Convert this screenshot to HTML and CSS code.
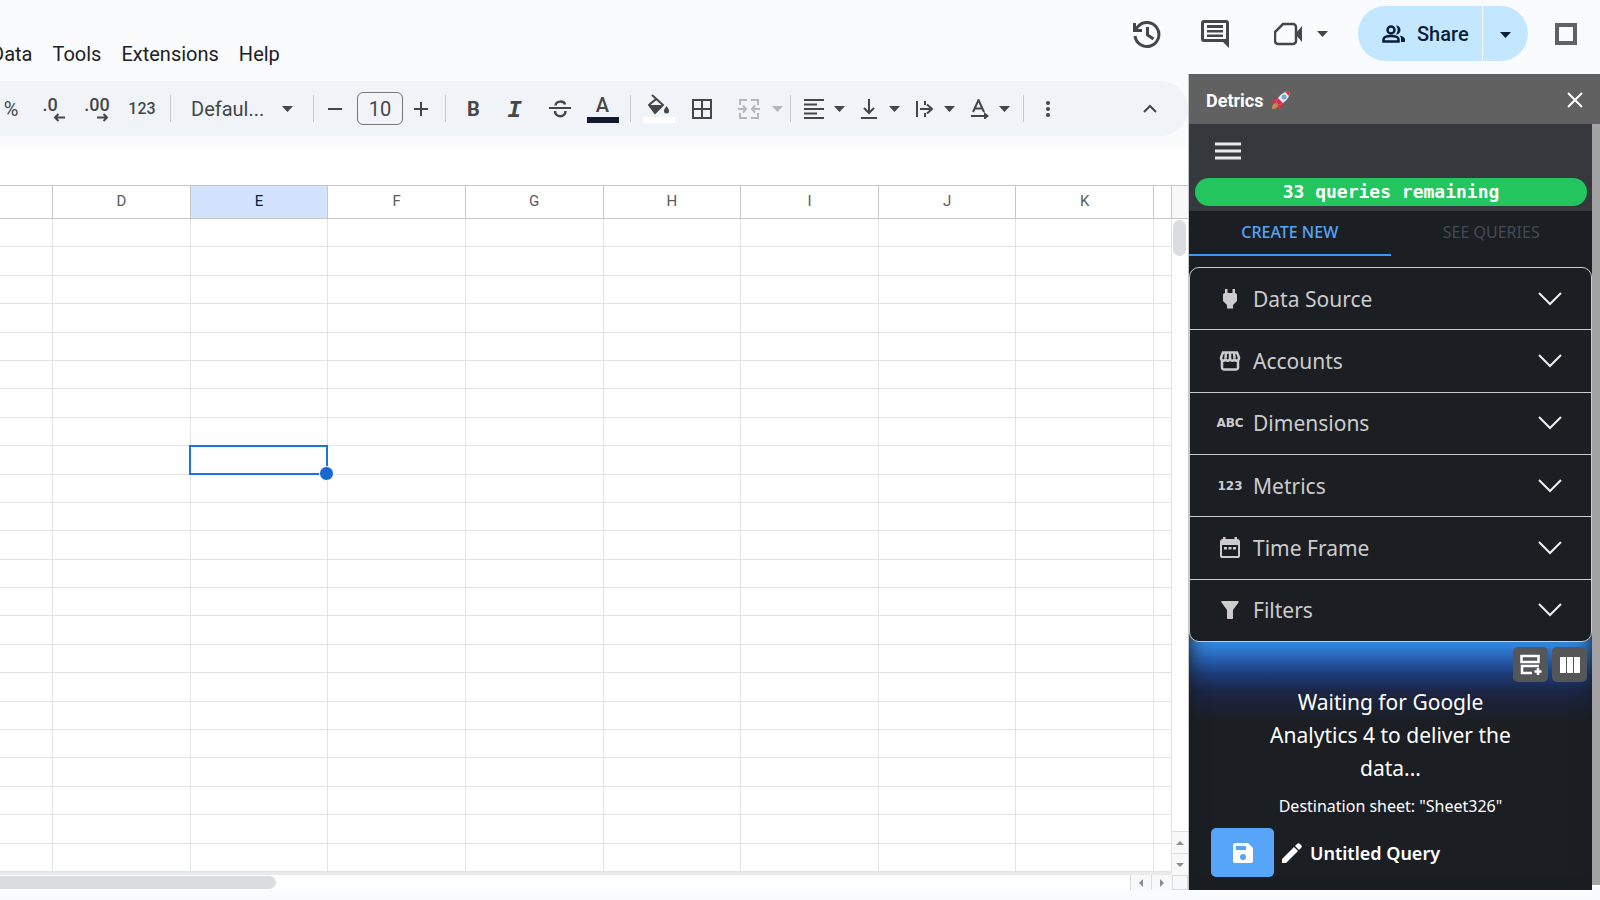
FILE: index.html
```html
<!DOCTYPE html>
<html lang="en">
<head>
    <meta charset="UTF-8">
    <meta name="viewport" content="width=device-width, initial-scale=1.0">
    <title>Detrics - Sheet</title>
    <link rel="stylesheet" href="styles.css">
</head>
<body>
    <header class="topbar">
        <nav class="menu">
            <button class="menu-first">Data</button>
            <button>Tools</button>
            <button>Extensions</button>
            <button>Help</button>
        </nav>
        <div class="actions">
            <button class="action" aria-label="Version history">
                <svg width="30" height="30" viewBox="0 0 30 30" fill="none" stroke="#444746" stroke-width="3"><path d="M3 17a12 12 0 1 0 3-9.500L3 10.500"/><path d="M2.500 4v7.500H10M15.500 8v8l6 4"/></svg>
            </button>
            <button class="action" aria-label="Comments">
                <svg width="28" height="28" viewBox="0 0 28 28"><path d="M3 0h22a3 3 0 0 1 3 3v25l-6-6H3a3 3 0 0 1-3-3V3a3 3 0 0 1 3-3zm0 3v16h22V3zM6 5h16v3H6zm0 5h16v2.500H6zm0 4.500h16V17H6z" fill="#444746" fill-rule="evenodd"/></svg>
            </button>
            <button class="action meet" aria-label="Meet">
                <svg width="30" height="24" viewBox="0 0 30 24"><path d="M9 2h10a3 3 0 0 1 3 3v14a3 3 0 0 1-3 3H4a3 3 0 0 1-3-3v-9z" fill="none" stroke="#444746" stroke-width="2.500"/><path d="M22 11l6-7v16l-6-7z" fill="#444746"/></svg>
                <svg width="11" height="6" viewBox="0 0 11 6"><path d="M0 0h11L5.500 6z" fill="#444746"/></svg>
            </button>
            <div class="share">
                <button class="share-main">
                    <svg width="24" height="18" viewBox="0 0 24 18" fill="none" stroke="#0b1d3a" stroke-width="2.500"><circle cx="9" cy="5" r="3.500"/><path d="M1.500 16.500v-2c0-2.500 4-3.500 7.500-3.500s7.500 1 7.500 3.500v2z"/><path d="M14 .5a4.500 4.500 0 0 1 0 9 7 7 0 0 0 0-9zM17.500 10.500c3 .5 5.500 2 5.500 4V17h-4v-3c0-1.500-.5-2.500-1.500-3.500z" fill="#0b1d3a" stroke="none"/></svg>
                    Share
                </button>
                <button class="share-more" aria-label="Share options">
                    <svg width="11" height="6" viewBox="0 0 11 6"><path d="M0 0h11L5.500 6z" fill="#0b1d3a"/></svg>
                </button>
            </div>
            <button class="account" aria-label="Account"></button>
        </div>
    </header>

    <main class="workspace">
        <section class="editor">
            <div class="toolbar">
                <button class="tool percent">%</button>
                <button class="tool decimal" aria-label="Decrease decimals">.0
                    <svg class="left-arrow" width="12" height="9" viewBox="0 0 12 9"><path d="M12 4.500H2M5.500 1L2 4.500 5.500 8" fill="none" stroke="#444746" stroke-width="2"/></svg>
                </button>
                <button class="tool decimal" aria-label="Increase decimals">.00
                    <svg class="right-arrow" width="12" height="9" viewBox="0 0 12 9"><path d="M0 4.500h10M6.500 1L10 4.500 6.500 8" fill="none" stroke="#444746" stroke-width="2"/></svg>
                </button>
                <button class="tool number">123</button>
                <span class="sep"></span>
                <label class="font">
                    <select aria-label="Font"><option>Defaul...</option></select>
                    <svg class="caret" width="11" height="6" viewBox="0 0 11 6"><path d="M0 0h11L5.500 6z"/></svg>
                </label>
                <span class="sep"></span>
                <button class="tool minus" aria-label="Smaller">
                    <svg width="14" height="14" viewBox="0 0 14 14"><path d="M0 7h14" stroke="#444746" stroke-width="2"/></svg>
                </button>
                <input class="size" type="text" value="10" aria-label="Font size">
                <button class="tool plus" aria-label="Bigger">
                    <svg width="14" height="14" viewBox="0 0 14 14"><path d="M0 7h14M7 0v14" stroke="#444746" stroke-width="2"/></svg>
                </button>
                <span class="sep"></span>
                <button class="tool style bold">B</button>
                <button class="tool style italic">I</button>
                <button class="tool style" aria-label="Strikethrough">
                    <svg width="22" height="18" viewBox="0 0 22 18" fill="none" stroke="#444746" stroke-width="2"><path d="M0 8h22"/><path d="M6.500 5.500C7 .500 15 .500 16 4.500M6 11c0 7 10.500 7 10.500 0" stroke-width="2.500"/></svg>
                </button>
                <button class="tool style text-color"><span>A</span><i class="swatch dark"></i></button>
                <span class="sep"></span>
                <button class="tool style text-color" aria-label="Fill color">
                    <svg width="22" height="22" viewBox="0 0 22 22"><path d="M4 1l11 10-8 8-6-8 7-6" fill="none" stroke="#444746" stroke-width="2"/><path d="M1 11h14l-7 8zM18.500 12c1.500 2 2.500 3.500 2.500 5a2.500 2.500 0 0 1-5 0c0-1.500 1-3 2.500-5z" fill="#444746"/></svg>
                    <i class="swatch"></i>
                </button>
                <button class="tool style" aria-label="Borders">
                    <svg width="20" height="20" viewBox="0 0 20 20" fill="none" stroke="#444746" stroke-width="2"><path d="M1 1h18v18H1zM10 1v18M1 10h18"/></svg>
                </button>
                <button class="tool merge" aria-label="Merge cells" disabled>
                    <svg width="22" height="20" viewBox="0 0 22 20" fill="none" stroke="#b4b8ba" stroke-width="2"><path d="M9 1H2v5M9 19H2v-5M13 1h7v5M13 19h7v-5M0 10h7M22 10h-7M5 6.500L8 10l-3 3.500M17 6.500L14 10l3 3.500"/></svg>
                    <svg class="caret" width="11" height="6" viewBox="0 0 11 6"><path d="M0 0h11L5.500 6z"/></svg>
                </button>
                <span class="sep"></span>
                <button class="tool drop" aria-label="Horizontal align">
                    <svg width="24" height="20" viewBox="0 0 24 20"><path d="M2 1h20M2 5.500h13M2 10h20M2 14.500h13M2 19h20" stroke="#444746" stroke-width="2"/></svg>
                    <svg class="caret" width="11" height="6" viewBox="0 0 11 6"><path d="M0 0h11L5.500 6z"/></svg>
                </button>
                <button class="tool drop" aria-label="Vertical align">
                    <svg width="24" height="20" viewBox="0 0 24 20"><path d="M12 0v13M7 9l5 5 5-5M4 19h16" fill="none" stroke="#444746" stroke-width="2"/></svg>
                    <svg class="caret" width="11" height="6" viewBox="0 0 11 6"><path d="M0 0h11L5.500 6z"/></svg>
                </button>
                <button class="tool drop" aria-label="Text wrapping">
                    <svg width="24" height="20" viewBox="0 0 24 20"><path d="M5 2v16M13 2v4M13 14v4M8 10h12M15 5.500l5 4.500-5 4.500" fill="none" stroke="#444746" stroke-width="2"/></svg>
                    <svg class="caret" width="11" height="6" viewBox="0 0 11 6"><path d="M0 0h11L5.500 6z"/></svg>
                </button>
                <button class="tool drop" aria-label="Text rotation">
                    <svg width="24" height="20" viewBox="0 0 24 20"><path d="M6 13l5.500-12 5.500 12M8 9.500h7" fill="none" stroke="#444746" stroke-width="2"/><path d="M4 16h13v-3l5 4-5 4v-3H4z" fill="#444746"/></svg>
                    <svg class="caret" width="11" height="6" viewBox="0 0 11 6"><path d="M0 0h11L5.500 6z"/></svg>
                </button>
                <span class="sep"></span>
                <button class="tool more" aria-label="More">
                    <svg width="6" height="18" viewBox="0 0 6 18" fill="#444746"><circle cx="3" cy="3" r="2"/><circle cx="3" cy="9" r="2"/><circle cx="3" cy="15" r="2"/></svg>
                </button>
                <button class="tool collapse" aria-label="Hide menus">
                    <svg width="14" height="9" viewBox="0 0 14 9"><path d="M1 8l6-6 6 6" fill="none" stroke="#444746" stroke-width="2"/></svg>
                </button>
            </div>
            <div class="formula-bar"></div>
            <div class="sheet">
                <div class="table-wrap">
                    <table class="cells">
                        <thead>
                            <tr>
                                <th class="edge"></th>
                                <th>D</th>
                                <th class="active">E</th>
                                <th>F</th>
                                <th>G</th>
                                <th>H</th>
                                <th>I</th>
                                <th>J</th>
                                <th>K</th>
                                <th class="last"></th>
                            </tr>
                        </thead>
                        <tbody id="rows"></tbody>
                    </table>
                </div>
                <div class="vscroll">
                    <div class="vhead"></div>
                    <div class="vthumb"></div>
                    <button class="vbtn up" aria-label="Scroll up"><svg width="8" height="4" viewBox="0 0 8 4"><path d="M0 4h8L4 0z" fill="#8a8d90"/></svg></button>
                    <button class="vbtn" aria-label="Scroll down"><svg width="8" height="4" viewBox="0 0 8 4"><path d="M0 0h8L4 4z" fill="#8a8d90"/></svg></button>
                </div>
                <div class="hscroll">
                    <div class="hthumb"></div>
                    <button class="hbtn first" aria-label="Scroll left"><svg width="4" height="8" viewBox="0 0 4 8"><path d="M4 0v8L0 4z" fill="#8a8d90"/></svg></button>
                    <button class="hbtn" aria-label="Scroll right"><svg width="4" height="8" viewBox="0 0 4 8"><path d="M0 0v8l4-4z" fill="#8a8d90"/></svg></button>
                </div>
                <div class="corner"></div>
            </div>
        </section>

        <aside class="sidebar">
            <div class="side-title">
                <h2>Detrics</h2>
                <svg width="20" height="20" viewBox="0 0 20 20"><path d="M6 8L1 11l1 3 4-2zM12 14l-3 5-3-1 2-4z" fill="#dd2e44"/><path d="M5 13c-3 0-4 3-4 6 3 0 6-1 6-4z" fill="#c98a4b"/><path d="M19 1c-6 0-11 4-14 11l3 3c7-3 11-8 11-14z" fill="#e6edf2"/><path d="M19 1c-2 0-4 .3-5 1l4 4c.7-2 1-3 1-5zM5 12l3 3 4-2-5-5z" fill="#dd2e44"/><circle cx="13" cy="7" r="2.500" fill="#6fa8d8"/></svg>
                <button class="close" aria-label="Close"><svg width="16" height="16" viewBox="0 0 16 16"><path d="M1 1l14 14M15 1L1 15" stroke="#fff" stroke-width="2"/></svg></button>
            </div>
            <div class="side-body">
                <div class="app">
                    <div class="app-head">
                        <button class="burger" aria-label="Menu"><svg width="26" height="18" viewBox="0 0 26 18"><path d="M0 2h26M0 9h26M0 16h26" stroke="#e8e8e8" stroke-width="3"/></svg></button>
                        <div class="pill">33 queries remaining</div>
                    </div>
                    <div class="tabs">
                        <button class="tab on">CREATE NEW</button>
                        <button class="tab">SEE QUERIES</button>
                    </div>
                    <div class="accordion">
                        <button class="item">
                            <span class="ico"><svg width="20" height="20" viewBox="0 0 20 20" fill="#ccc"><path d="M5 0h2.500v4h5V0H15v4c1.500 0 2 1 2 2v6l-4 4v3.500H7V16l-4-4V6c0-1 .5-2 2-2z"/></svg></span>
                            <span>Data Source</span>
                            <svg class="chev" width="24" height="14" viewBox="0 0 24 14"><path d="M1 1l11 11L23 1"/></svg>
                        </button>
                        <button class="item">
                            <span class="ico"><svg width="22" height="20" viewBox="0 0 22 20" fill="none" stroke="#ccc" stroke-width="2.500"><path d="M4 1.500h14l2 5c0 4-4 4-4.500 1C15 10.500 11 10.500 11 7c0 3.500-4 3.500-4.500 .5C6 10.500 2 10.500 2 6.500zM6.500 7L7 1M11 7V1M15.500 7L15 1M3 9v8a2 2 0 0 0 2 1.500h12a2 2 0 0 0 2-1.500V9"/></svg></span>
                            <span>Accounts</span>
                            <svg class="chev" width="24" height="14" viewBox="0 0 24 14"><path d="M1 1l11 11L23 1"/></svg>
                        </button>
                        <button class="item">
                            <span class="ico word">ABC</span>
                            <span>Dimensions</span>
                            <svg class="chev" width="24" height="14" viewBox="0 0 24 14"><path d="M1 1l11 11L23 1"/></svg>
                        </button>
                        <button class="item">
                            <span class="ico word">123</span>
                            <span>Metrics</span>
                            <svg class="chev" width="24" height="14" viewBox="0 0 24 14"><path d="M1 1l11 11L23 1"/></svg>
                        </button>
                        <button class="item">
                            <span class="ico"><svg width="20" height="22" viewBox="0 0 20 22" fill="#ccc"><path fill-rule="evenodd" d="M3 0h2.500v2h9V0H17v2a3 3 0 0 1 3 3v14a2 2 0 0 1-2 2H2a2 2 0 0 1-2-2V5a3 3 0 0 1 3-3zM2 8v11h16V8z"/><path d="M4 10h3v2.500H4zm4.500 0h3v2.500h-3zm4.500 0h3v2.500h-3z"/></svg></span>
                            <span>Time Frame</span>
                            <svg class="chev" width="24" height="14" viewBox="0 0 24 14"><path d="M1 1l11 11L23 1"/></svg>
                        </button>
                        <button class="item">
                            <span class="ico"><svg width="18" height="18" viewBox="0 0 18 18" fill="#ccc"><path d="M1 0h16c1 0 1 1 .5 1.500L12 9v8c0 .6-.4 1-1 1H7c-.6 0-1-.4-1-1V9L.5 1.500C0 1 0 0 1 0z"/></svg></span>
                            <span>Filters</span>
                            <svg class="chev" width="24" height="14" viewBox="0 0 24 14"><path d="M1 1l11 11L23 1"/></svg>
                        </button>
                    </div>
                    <div class="status">
                        <div class="status-tools">
                            <button aria-label="Append rows"><svg width="22" height="22" viewBox="0 0 22 22" fill="none" stroke="#fff" stroke-width="2.500"><path d="M3 2h15.500v6H1.500V2zM19 12H2v7h10M18 14v7M14.500 17.500h7"/></svg></button>
                            <button aria-label="Columns"><svg width="20" height="16" viewBox="0 0 20 16" fill="#fff"><path d="M0 0h6v16H0zM7 0h6v16H7zM14 0h6v16h-6z"/></svg></button>
                        </div>
                        <p class="waiting">Waiting for Google Analytics 4 to deliver the data...</p>
                        <p class="destination">Destination sheet: "Sheet326"</p>
                        <div class="query">
                            <button class="save" aria-label="Save"><svg width="20" height="20" viewBox="0 0 20 20"><path fill-rule="evenodd" d="M2 0h13l5 5v13a2 2 0 0 1-2 2H2a2 2 0 0 1-2-2V2a2 2 0 0 1 2-2zm1 3v4h10V3zm7 8a3 3 0 1 0 0 6 3 3 0 0 0 0-6z" fill="#fff"/></svg></button>
                            <button class="rename">
                                <svg width="20" height="20" viewBox="0 0 20 20" fill="#fff"><path d="M0 16L12 4l4 4L4 20H0zM13 3l2-2c1-1 2-1 3 0l1 1c1 1 1 2 0 3l-2 2z"/></svg>
                                Untitled Query
                            </button>
                        </div>
                    </div>
                </div>
                <div class="side-scroll"></div>
            </div>
        </aside>
    </main>

<script>
    const rows = document.getElementById("rows");
    for (let r = 0; r < 23; r++) {
        const tr = document.createElement("tr");
        for (let c = 0; c < 10; c++) {
            const td = document.createElement("td");
            // E9 is the selected cell
            if (r === 8 && c === 2) td.classList.add("selected");
            tr.appendChild(td);
        }
        rows.appendChild(tr);
    }
</script>
</body>
</html>
```
FILE: styles.css
```css
* {
    box-sizing: border-box;
}
body {
    margin: 0;
    height: 100vh;
    display: flex;
    flex-direction: column;
    overflow: hidden;
    padding-bottom: 10px;
    background: #f9fbfd;
    color: #202124;
    font-family: Roboto, 'Liberation Sans', sans-serif;
}
button {
    border: none;
    background: none;
    padding: 0;
    font-family: inherit;
    color: inherit;
    cursor: pointer;
}
svg {
    flex-shrink: 0;
}

/* top bar */
.topbar {
    height: 74px;
    flex-shrink: 0;
    display: flex;
    justify-content: space-between;
}
.menu {
    display: flex;
    align-items: flex-end;
    gap: 20px;
    padding-bottom: 7px;
}
.menu button {
    font-size: 20px;
    line-height: 26px;
}
.menu-first {
    margin-left: -9px;
}
.actions {
    display: flex;
    align-items: center;
    height: 67px;
    padding-right: 23px;
}
.action {
    display: flex;
    align-items: center;
    justify-content: center;
    width: 68px;
}
.meet {
    width: 99px;
    gap: 13px;
    padding-left: 4px;
}
.share {
    display: flex;
    height: 55px;
    margin: 0 27px 0 10px;
    gap: 1px;
}
.share button {
    background: #c2e7ff;
    color: #0b1d3a;
}
.share-main {
    display: flex;
    align-items: center;
    gap: 11px;
    width: 124px;
    padding-left: 24px;
    border-radius: 28px 0 0 28px;
    font-size: 20px;
    font-weight: 500;
}
.share-more {
    width: 45px;
    border-radius: 0 28px 28px 0;
}
.account {
    width: 22px;
    height: 22px;
    border: 4px solid #616161;
}

/* spreadsheet */
.workspace {
    flex: 1;
    min-height: 0;
    display: flex;
}
.editor {
    flex: 1;
    min-width: 0;
    display: flex;
    flex-direction: column;
    padding-top: 7px;
}
.toolbar {
    height: 55px;
    flex-shrink: 0;
    display: flex;
    align-items: center;
    background: #f0f4f8;
    border-radius: 0 28px 28px 0;
    color: #444746;
}
.tool {
    height: 40px;
    flex-shrink: 0;
    display: flex;
    align-items: center;
    justify-content: center;
    font-size: 20px;
}
.percent {
    width: 32px;
    padding-right: 10px;
}
.decimal {
    position: relative;
    width: 44px;
    padding-bottom: 8px;
    padding-right: 8px;
    font-size: 18px;
    font-weight: 500;
}
.decimal + .decimal {
    padding-right: 2px;
}
.decimal svg {
    position: absolute;
    right: 11px;
    bottom: 7px;
}
.number {
    width: 44px;
    font-size: 16px;
    font-weight: 500;
}
.sep {
    width: 1px;
    height: 27px;
    margin: 0 6px;
    background: #c7c9cc;
}
.font {
    width: 130px;
    display: flex;
    align-items: center;
    justify-content: space-between;
    padding: 0 14px;
}
.font select {
    appearance: none;
    border: none;
    background: none;
    padding: 0;
    color: inherit;
    font: 20px Roboto, sans-serif;
}
.caret {
    fill: #444746;
}
.minus {
    width: 37px;
    padding-right: 7px;
}
.size {
    width: 46px;
    height: 33px;
    border: 1px solid #747775;
    border-radius: 6px;
    background: none;
    padding: 0;
    text-align: center;
    color: inherit;
    font: 20px Roboto, sans-serif;
}
.plus {
    width: 36px;
}
.style {
    width: 43px;
}
.bold {
    font-size: 20px;
    font-weight: bold;
}
.italic {
    padding: 4px 4px 0 0;
    font: italic bold 24px 'Liberation Mono', monospace;
}
.text-color {
    flex-direction: column;
    gap: 1px;
    font-size: 20px;
    font-weight: 500;
    line-height: 22px;
}
.swatch {
    width: 32px;
    height: 6px;
    background: #fff;
}
.swatch.dark {
    background: #14192e;
}
.merge {
    width: 61px;
    gap: 12px;
    padding-left: 13px;
}
.merge .caret {
    fill: #b4b8ba;
}
.drop {
    width: 55px;
    gap: 8px;
    padding-right: 2px;
}
.more {
    width: 36px;
}
.collapse {
    width: 38px;
    margin: 0 19px 0 auto;
}
.formula-bar {
    height: 38px;
    flex-shrink: 0;
    margin-top: 11px;
    background: #fff;
}
.sheet {
    flex: 1;
    min-height: 0;
    display: grid;
    grid-template-columns: 1fr 16px;
    grid-template-rows: 1fr 15px;
    background: #fff;
}
.table-wrap {
    border-bottom: 3px solid #e9eaeb;
    min-height: 0;
}
.cells {
    width: 100%;
    height: 100%;
    table-layout: fixed;
    border-collapse: separate;
    border-spacing: 0;
}
.cells th {
    height: 34px;
    padding: 0 0 2px;
    border: solid #c4c7c5;
    border-width: 1px 1px 1px 0;
    font-size: 15px;
    font-weight: normal;
    color: #575b5f;
}
.cells .edge {
    width: 53px;
}
.cells .last {
    width: 18px;
}
.cells .active {
    background: #d3e3fd;
    color: #041e49;
}
.cells td {
    padding: 0;
    border: solid #e2e3e3;
    border-width: 0 1px 1px 0;
}
.selected {
    position: relative;
}
.selected::before {
    content: "";
    position: absolute;
    inset: -1px -1px -1px -2px;
    border: 2px solid #1a73e8;
}
.selected::after {
    content: "";
    position: absolute;
    right: -7px;
    bottom: -7px;
    width: 13px;
    height: 13px;
    border: 1px solid #fff;
    border-radius: 50%;
    background: #1967d2;
}
.vscroll {
    display: flex;
    flex-direction: column;
}
.vhead {
    height: 34px;
    border: solid #c4c7c5;
    border-width: 1px 0;
    background: #f8f8f8;
}
.vthumb {
    width: 13px;
    height: 36px;
    margin: 1px auto 0 1px;
    border-radius: 7px;
    background: #dadce0;
}
.vbtn {
    height: 22px;
    border-top: 1px solid #dadce0;
    background: #f8f8f8;
    display: flex;
    align-items: center;
    justify-content: center;
}
.up {
    margin-top: auto;
}
.hscroll {
    display: flex;
    align-items: stretch;
}
.hthumb {
    width: 276px;
    height: 13px;
    margin: 1px auto 0 0;
    border-radius: 0 7px 7px 0;
    background: #dadce0;
}
.hbtn {
    width: 21px;
    border-left: 1px solid #dadce0;
    background: #f8f8f8;
    display: flex;
    align-items: center;
    justify-content: center;
}
.corner {
    border: 1px solid #dadce0;
    background: #f8f8f8;
}

/* sidebar */
.sidebar {
    width: 412px;
    flex-shrink: 0;
    display: flex;
    flex-direction: column;
    border-left: 1px solid #c4c7c5;
    font-family: 'Noto Sans', 'Open Sans', sans-serif;
    color: #fff;
}
.side-title {
    height: 50px;
    flex-shrink: 0;
    display: flex;
    align-items: center;
    gap: 7px;
    padding: 2px 17px 0 17px;
    background: #616161;
}
.side-title h2 {
    margin: 0;
    font: bold 18px Roboto, sans-serif;
}
.close {
    display: flex;
    margin-left: auto;
}
.side-body {
    flex: 1;
    min-height: 0;
    display: flex;
}
.app {
    flex: 1;
    display: flex;
    flex-direction: column;
    background: #1b1e23;
}
.side-scroll {
    width: 8px;
    margin-bottom: 5px;
    background: #a3a3a3;
}
.app-head {
    height: 87px;
    flex-shrink: 0;
    padding: 18px 5px 0 6px;
    background: #35383d;
}
.burger {
    display: flex;
    margin: 0 0 18px 20px;
}
.pill {
    height: 28px;
    border-radius: 14px;
    background: #22c55e;
    text-align: center;
    font: bold 18px/27px 'DejaVu Sans Mono', monospace;
}
.tabs {
    display: flex;
    height: 45px;
    flex-shrink: 0;
}
.tab {
    flex: 1;
    padding-bottom: 2px;
    border-bottom: 2px solid transparent;
    font-size: 16px;
    color: #454b55;
}
.tab.on {
    border-color: #4096f5;
    color: #57a5f8;
    font-weight: 500;
}
.accordion {
    height: 375px;
    flex-shrink: 0;
    margin-top: 11px;
    display: flex;
    flex-direction: column;
    border: 1px solid #ccc;
    border-radius: 10px;
    position: relative;
    background: #1b1e23;
}
.item {
    flex: 1;
    display: flex;
    align-items: center;
    padding: 0 29px 0 24px;
    font-size: 21px;
    color: #ccc;
}
.item + .item {
    border-top: 1px solid #ccc;
}
.ico {
    width: 32px;
    margin-right: 7px;
    display: flex;
    justify-content: center;
}
.word {
    font: bold 12px 'DejaVu Sans', sans-serif;
}
.chev {
    margin-left: auto;
    fill: none;
    stroke: #eee;
    stroke-width: 2;
}
.status {
    flex: 1;
    margin-top: -10px;
    padding: 15px 5px 0;
    background: linear-gradient(#3187df, #3187df 12px, #2862b4 26px, #1d3c78 42px, #1b2544 60px, #1b1e23 90px);
    box-shadow: inset 10px 0 20px -10px #1b1e23, inset -10px 0 20px -10px #1b1e23;
}
.status-tools {
    display: flex;
    justify-content: flex-end;
    gap: 4px;
}
.status-tools button {
    width: 35px;
    height: 35px;
    display: flex;
    align-items: center;
    justify-content: center;
    border-radius: 5px;
    background: #545658;
}
.waiting {
    width: 260px;
    margin: 4px auto 0;
    text-align: center;
    font-size: 21px;
    line-height: 33px;
}
.destination {
    margin: 9px 0 10px;
    text-align: center;
    font-size: 16px;
    line-height: 24px;
}
.query {
    display: flex;
    align-items: center;
    gap: 8px;
    padding-left: 17px;
}
.save {
    width: 63px;
    height: 49px;
    display: flex;
    align-items: center;
    justify-content: center;
    border-radius: 5px;
    background: #57a5f8;
}
.rename {
    display: flex;
    align-items: center;
    gap: 8px;
    font-size: 18px;
    font-weight: 600;
}
```
